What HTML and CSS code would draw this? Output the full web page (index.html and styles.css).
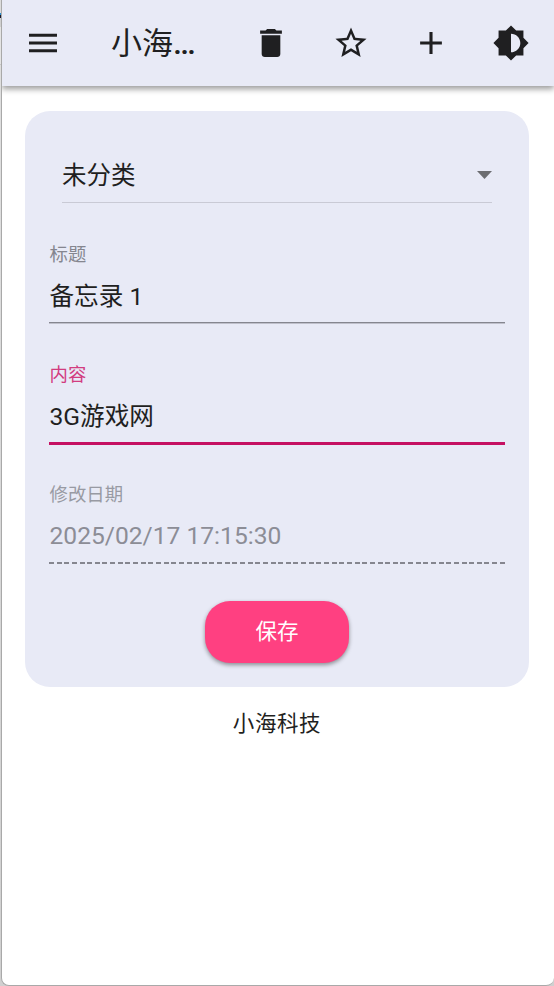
FILE: index.html
```html
<!DOCTYPE html>
<html lang="zh-CN">
<head>
<meta charset="utf-8">
<title>小海科技</title>
<link rel="stylesheet" href="styles.css">
</head>
<body>
<div class="window">
  <header class="toolbar">
    <button class="icon-button"><svg class="icon" viewBox="-.225 -.225 24.450 24.450"><path d="M3 18h18v-2H3v2zm0-5h18v-2H3v2zm0-7v2h18V6H3z"/></svg></button>
    <h1 class="app-title">小海<span class="ellipsis">…</span></h1>
    <button class="icon-button"><svg class="icon" viewBox="-.225 -.225 24.450 24.450"><path d="M6 19c0 1.100.9 2 2 2h8c1.100 0 2-.9 2-2V7H6v12zM19 4h-3.500l-1-1h-5l-1 1H5v2h14V4z"/></svg></button>
    <button class="icon-button"><svg class="icon" viewBox="-.225 -.225 24.450 24.450"><path d="M22 9.240l-7.190-.62L12 2 9.190 8.630 2 9.240l5.460 4.730L5.820 21 12 17.270 18.180 21l-1.630-7.030L22 9.240zM12 15.400l-3.760 2.270 1-4.280-3.320-2.880 4.380-.38L12 6.100l1.710 4.040 4.380.38-3.320 2.880 1 4.280L12 15.400z"/></svg></button>
    <button class="icon-button"><svg class="icon" viewBox="-.225 -.225 24.450 24.450"><path d="M19 13h-6v6h-2v-6H5v-2h6V5h2v6h6v2z"/></svg></button>
    <button class="icon-button"><svg class="icon" viewBox="-.225 -.225 24.450 24.450"><path d="M20 15.310L23.310 12 20 8.690V4h-4.690L12 .69 8.690 4H4v4.690L.69 12 4 15.310V20h4.690L12 23.310 15.310 20H20v-4.690zM12 18V6c3.310 0 6 2.690 6 6s-2.690 6-6 6z"/></svg></button>
  </header>
  <main class="content">
    <section class="card">
      <div class="select">
        <span>未分类</span>
        <svg class="arrow" viewBox="0 0 15 8"><path d="M0 0h15L7.500 8z"/></svg>
      </div>
      <div class="field">
        <label class="label">标题</label>
        <div class="value">备忘录 1</div>
      </div>
      <div class="field focused">
        <label class="label">内容</label>
        <div class="value">3G游戏网</div>
      </div>
      <div class="field disabled">
        <label class="label">修改日期</label>
        <div class="value">2025/02/17 17:15:30</div>
      </div>
      <button class="save">保存</button>
    </section>
    <footer class="footer">小海科技</footer>
  </main>
</div>
</body>
</html>
```
FILE: styles.css
```css
* { box-sizing: border-box; }

body {
  margin: 0;
  height: 986px;
  padding-left: 1px;
  overflow: hidden;
  background: linear-gradient(#dcdcdc 0 13px, #2a8fd0 13px 15px, #16182c 15px 18px, #d0d0d0 18px 27px, #e4e4e4 27px 64px, #c8c8c8 64px 65px, #dedede 65px 200px, #d0d0d0 986px);
  color: #1f1f21;
  font-family: Roboto, "Noto Sans CJK SC", sans-serif;
}

button {
  border: 0;
  padding: 0;
  font: inherit;
}

.window {
  height: 986px;
  border: solid #a9a9a9;
  border-width: 0 0 1px 1px;
  border-radius: 0 0 8px 8px;
  overflow: hidden;
  background: #fff;
}

.toolbar {
  display: flex;
  align-items: center;
  height: 86px;
  padding: 0 3px 0 1px;
  background: #e8eaf6;
  box-shadow: 0 3px 6px rgba(0, 0, 0, .4);
}

.icon-button {
  display: flex;
  flex: none;
  align-items: center;
  justify-content: center;
  width: 80px;
  height: 80px;
  background: none;
}

.icon {
  width: 38px;
  height: 38px;
  fill: #1f1f21;
}

.app-title {
  flex: 1;
  margin: 0;
  padding: 1px 0 0 28px;
  font-size: 31px;
  font-weight: 400;
  line-height: 48px;
  white-space: nowrap;
}

.ellipsis {
  font-size: 32px;
  font-weight: 500;
}

.content { padding: 25px 25px 0 23px; }

.card {
  height: 576px;
  padding: 30px 24px 0;
  border-radius: 25px;
  background: #e8eaf6;
}

.select {
  display: flex;
  align-items: center;
  justify-content: space-between;
  height: 62px;
  margin: 0 13px;
  padding-top: 4px;
  border-bottom: 1px solid #c9cad5;
  font-size: 24.500px;
}

.arrow {
  width: 15px;
  height: 8px;
  margin-top: 2px;
  fill: #6c6d71;
}

.field {
  height: 120px;
  padding-top: 38px;
  border-bottom: 1px solid #85868f;
  box-shadow: 0 1px #bfc0cb;
}

.label {
  display: block;
  height: 28px;
  padding-left: .5px;
  color: #85868f;
  font-size: 18.400px;
  line-height: 28px;
}

.value {
  height: 53px;
  padding-left: .5px;
  font-size: 24.600px;
  line-height: 56px;
  white-space: nowrap;
}

.focused {
  height: 122px;
  border-bottom: 3px solid #c51162;
  box-shadow: none;
}

.focused .label { color: #d23c7f; }

.disabled {
  height: 119px;
  padding-top: 36px;
  border-bottom: 0;
  box-shadow: none;
  background: repeating-linear-gradient(90deg, #85868f 0 5px, transparent 5px 7.640px) left bottom / 100% 2px no-repeat;
}

.disabled .label { color: #989aa3; }

.disabled .value {
  color: #8c8d96;
  line-height: 54px;
}

.save {
  display: block;
  width: 144px;
  height: 62px;
  margin: 37px auto 0;
  border-radius: 25px;
  background: #ff4081;
  box-shadow: 0 2px 4px rgba(0, 0, 0, .4);
  color: #fff;
  font-size: 21.500px;
  line-height: 60px;
}

.footer {
  padding-top: 21px;
  font-size: 21.500px;
  letter-spacing: .6px;
  line-height: 32px;
  text-align: center;
}
```
